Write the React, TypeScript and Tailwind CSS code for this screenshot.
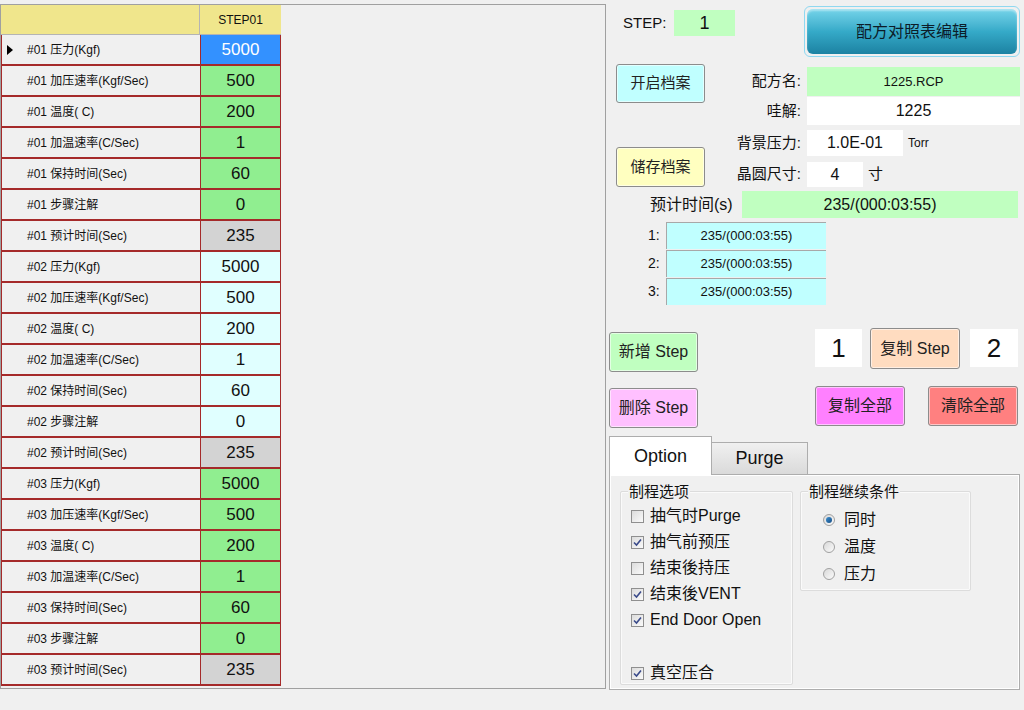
import React from "react";

type Row = { label: string; value: string; bg: string; selected?: boolean };

const fields: [string, string][] = [
  ["压力(Kgf)", "5000"],
  ["加压速率(Kgf/Sec)", "500"],
  ["温度( C)", "200"],
  ["加温速率(C/Sec)", "1"],
  ["保持时间(Sec)", "60"],
  ["步骤注解", "0"],
  ["预计时间(Sec)", "235"],
];

const rows: Row[] = [1, 2, 3].flatMap((s) =>
  fields.map(([f, v], i) => {
    let bg = s === 2 ? "bg-[#e0ffff]" : "bg-[#90ee90]";
    if (i === 6) bg = "bg-[#d3d3d3]";
    const selected = s === 1 && i === 0;
    if (selected) bg = "bg-[#3391ff] text-white";
    return { label: `#0${s} ${f}`, value: v, bg, selected };
  })
);

function Btn({ className, children }: { className: string; children: React.ReactNode }) {
  return (
    <div
      className={`flex items-center justify-center rounded-[3px] border border-[#8c8c8c] text-[15px] text-[#222] shadow-[inset_0_0_0_1px_rgba(255,255,255,0.55)] ${className}`}
    >
      {children}
    </div>
  );
}

function Check({ checked, label, className = "" }: { checked?: boolean; label: string; className?: string }) {
  return (
    <div className={`flex h-[26px] items-center ${className}`}>
      <div className="ml-[10px] flex h-[13px] w-[13px] items-center justify-center border border-[#8f8f8f] bg-gradient-to-br from-[#dcdcdc] to-[#fafafa]">
        {checked && (
          <svg width="9" height="9" viewBox="0 0 9 9">
            <path d="M1 4.5 L3.5 7 L8 1.5" stroke="#3a4a8a" strokeWidth="1.6" fill="none" />
          </svg>
        )}
      </div>
      <span className="ml-[6px] text-[16px] text-[#111]">{label}</span>
    </div>
  );
}

function Radio({ checked, label }: { checked?: boolean; label: string }) {
  return (
    <div className="flex h-[27px] items-center">
      <div className="ml-[22px] flex h-[12px] w-[12px] items-center justify-center rounded-full border border-[#a0a0a0] bg-gradient-to-br from-[#d8d8d8] to-[#fbfbfb]">
        {checked && <div className="h-[6px] w-[6px] rounded-full bg-gradient-to-br from-[#3b8fd0] to-[#1a4f86]" />}
      </div>
      <span className="ml-[9px] text-[16px] text-[#111]">{label}</span>
    </div>
  );
}

export default function App() {
  return (
    <div className="flex h-[710px] w-[1024px] overflow-hidden bg-[#f0f0f0] font-['Liberation_Sans','Noto_Sans_CJK_SC',sans-serif] text-[#111]">
      {/* GRID */}
      <div className="mt-[4px] h-[685px] w-[606px] shrink-0 border border-[#a0a0a0] bg-[#f0f0f0]">
        <div className="w-[280px]">
          <div className="flex h-[30px] border-b border-[#b4b4b4] bg-[#f0e68c]">
            <div className="w-[199px] border-r border-[#b4b4b4]" />
            <div className="flex flex-1 items-center justify-center text-[12px]">STEP01</div>
          </div>
          {rows.map((r) => (
            <div key={r.label} className="flex h-[31px] border-b-2 border-l border-[#a52a2a]">
              <div className="relative flex w-[199px] items-center border-r border-[#a52a2a] pl-[25px] text-[12px]">
                {r.selected && (
                  <svg className="absolute left-[5px] top-[10px]" width="6" height="10" viewBox="0 0 6 10">
                    <path d="M0 0 L6 5 L0 10 Z" fill="#000" />
                  </svg>
                )}
                {r.label}
              </div>
              <div className={`flex w-[80px] items-center justify-center border-r border-[#a52a2a] text-[17px] ${r.bg}`}>
                {r.value}
              </div>
            </div>
          ))}
        </div>
      </div>

      {/* RIGHT PANEL */}
      <div className="flex-1">
        <div className="flex">
          <div className="w-[130px] shrink-0">
            <div className="mt-[10px] flex h-[26px] items-center">
              <span className="ml-[17px] w-[51px] text-[15px]">STEP:</span>
              <div className="flex h-[26px] w-[61px] items-center justify-center bg-[#c0ffc0] text-[18px]">1</div>
            </div>
            <Btn className="ml-[10px] mt-[28px] h-[39px] w-[89px] bg-[#c0ffff]">开启档案</Btn>
            <Btn className="ml-[10px] mt-[44px] h-[40px] w-[89px] bg-[#ffffc0]">储存档案</Btn>
          </div>
          <div className="flex-1">
            <div className="ml-[68px] mt-[6px] h-[51px] w-[216px] rounded-[6px] border border-[#8fd8f0] p-[2px]">
              <div className="flex h-full items-center justify-center rounded-[6px] bg-gradient-to-b from-[#74d4ea] via-[#35aac8] to-[#1c82a2] text-[16px] text-[#0c1c28] shadow-[inset_0_2px_2px_rgba(255,255,255,0.4)]">
                配方对照表编辑
              </div>
            </div>
            <div className="mt-[10px] flex h-[29px] items-center">
              <span className="w-[65px] text-right text-[15px]">配方名:</span>
              <div className="ml-[6px] flex h-full w-[213px] items-center justify-center bg-[#c0ffc0] text-[13px]">1225.RCP</div>
            </div>
            <div className="mt-[1px] flex h-[28px] items-center">
              <span className="w-[65px] text-right text-[15px]">哇解:</span>
              <div className="ml-[6px] flex h-full w-[213px] items-center justify-center bg-white text-[16px]">1225</div>
            </div>
            <div className="mt-[5px] flex h-[26px] items-center">
              <span className="w-[65px] text-right text-[15px]">背景压力:</span>
              <div className="ml-[6px] flex h-full w-[96px] items-center justify-center bg-white text-[16px]">1.0E-01</div>
              <span className="ml-[5px] text-[12px]">Torr</span>
            </div>
            <div className="mt-[6px] flex h-[25px] items-center">
              <span className="w-[65px] text-right text-[15px]">晶圆尺寸:</span>
              <div className="ml-[6px] flex h-full w-[56px] items-center justify-center bg-white text-[16px]">4</div>
              <span className="ml-[5px] text-[15px]">寸</span>
            </div>
          </div>
        </div>

        {/* ESTIMATE */}
        <div className="mt-[4px] flex h-[27px] items-center">
          <span className="ml-[44px] w-[92px] text-[16px]">预计时间(s)</span>
          <div className="flex h-full w-[276px] items-center justify-center bg-[#c0ffc0] text-[16px]">235/(000:03:55)</div>
        </div>
        <div className="mt-[4px] flex flex-col gap-[1px]">
          {["1:", "2:", "3:"].map((n) => (
            <div key={n} className="flex h-[27px] items-center">
              <span className="ml-[42px] w-[18px] text-[14px]">{n}</span>
              <div className="flex h-full w-[160px] items-center justify-center border-l border-t border-[#a8a8a8] bg-[#c0ffff] text-[13px]">
                235/(000:03:55)
              </div>
            </div>
          ))}
        </div>

        {/* STEP BUTTONS */}
        <div className="mt-[23px] flex items-start">
          <Btn className="ml-[3px] mt-[4px] h-[40px] w-[89px] bg-[#c0ffc0] text-[16px]">新增 Step</Btn>
          <div className="ml-[117px] mt-[1px] flex h-[38px] w-[47px] items-center justify-center bg-white text-[26px]">1</div>
          <Btn className="ml-[8px] h-[41px] w-[90px] bg-[#ffdcc0] text-[16px]">复制 Step</Btn>
          <div className="ml-[10px] mt-[1px] flex h-[38px] w-[48px] items-center justify-center bg-white text-[26px]">2</div>
        </div>
        <div className="mt-[14px] flex items-start">
          <Btn className="ml-[3px] mt-[2px] h-[40px] w-[89px] bg-[#ffc0ff] text-[16px]">删除 Step</Btn>
          <Btn className="ml-[117px] h-[40px] w-[90px] bg-[#ff80ff] text-[16px]">复制全部</Btn>
          <Btn className="ml-[23px] h-[40px] w-[90px] bg-[#ff8080] text-[16px]">清除全部</Btn>
        </div>

        {/* TABS */}
        <div className="ml-[3px] mt-[8px] w-[411px]">
          <div className="flex items-end">
            <div className="relative z-10 -mb-px flex h-[39px] w-[103px] items-center justify-center border border-b-0 border-[#adadad] bg-white text-[18px]">
              Option
            </div>
            <div className="flex h-[32px] w-[96px] items-center justify-center border border-b-0 border-l-0 border-[#adadad] bg-gradient-to-b from-[#f0f0f0] to-[#dadada] text-[18px]">
              Purge
            </div>
          </div>
          <div className="flex h-[216px] border border-[#adadad] bg-[#f0f0f0] pt-[16px] shadow-[inset_0_0_0_1px_#ffffff]">
            <div className="ml-[10px] h-[194px] w-[173px] rounded-[2px] border border-[#dcdcdc] shadow-[inset_0_0_0_1px_#fafafa]">
              <div className="-mt-[9px] ml-[7px] w-fit bg-[#f0f0f0] px-[1px] text-[15px] leading-[17px]">制程选项</div>
              <div className="mt-[3px]">
                <Check label="抽气时Purge" />
                <Check checked label="抽气前预压" />
                <Check label="结束後持压" />
                <Check checked label="结束後VENT" />
                <Check checked label="End Door Open" />
                <Check checked label="真空压合" className="mt-[27px]" />
              </div>
            </div>
            <div className="ml-[7px] h-[100px] w-[171px] rounded-[2px] border border-[#dcdcdc] shadow-[inset_0_0_0_1px_#fafafa]">
              <div className="-mt-[9px] ml-[7px] w-fit bg-[#f0f0f0] px-[1px] text-[15px] leading-[17px]">制程继续条件</div>
              <div className="mt-[6px]">
                <Radio checked label="同时" />
                <Radio label="温度" />
                <Radio label="压力" />
              </div>
            </div>
          </div>
        </div>
      </div>
    </div>
  );
}
